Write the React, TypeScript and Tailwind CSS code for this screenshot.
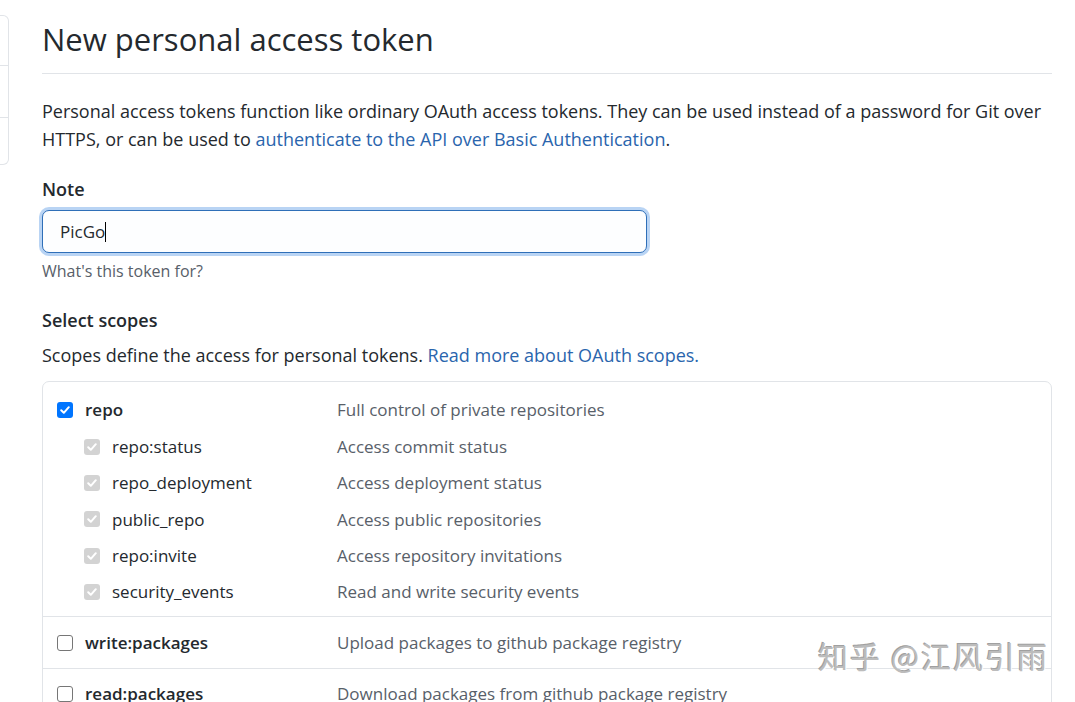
import React from "react";

const font = { fontFamily: '"Open Sans", "Noto Sans", "Noto Sans CJK SC", sans-serif' };

function Check({ variant }: { variant: "on" | "off" | "dis" }) {
  if (variant === "off") {
    return <span className="inline-block w-[16px] h-[16px] rounded-[3px] border border-[#767676] bg-white shrink-0" />;
  }
  const bg = variant === "on" ? "bg-[#0075ff]" : "bg-[#d3d3d3]";
  return (
    <span className={`inline-flex items-center justify-center w-[16px] h-[16px] rounded-[3px] ${bg} shrink-0`}>
      <svg width="12" height="12" viewBox="0 0 12 12">
        <path d="M2.2 6.3 L4.8 8.8 L9.8 3.2" fill="none" stroke="white" strokeWidth="2" strokeLinecap="round" strokeLinejoin="round" />
      </svg>
    </span>
  );
}

type Row = { name: string; desc: string; sub?: boolean; bold?: boolean; v: "on" | "off" | "dis" };

const repoRows: Row[] = [
  { name: "repo", desc: "Full control of private repositories", bold: true, v: "on" },
  { name: "repo:status", desc: "Access commit status", sub: true, v: "dis" },
  { name: "repo_deployment", desc: "Access deployment status", sub: true, v: "dis" },
  { name: "public_repo", desc: "Access public repositories", sub: true, v: "dis" },
  { name: "repo:invite", desc: "Access repository invitations", sub: true, v: "dis" },
  { name: "security_events", desc: "Read and write security events", sub: true, v: "dis" },
];

function ScopeRow({ r }: { r: Row }) {
  return (
    <div className="flex items-center h-[36.4px]">
      <div className={`flex items-center w-[280px] shrink-0 ${r.sub ? "pl-[27px]" : ""}`}>
        <Check variant={r.v} />
        <span className={`ml-[12px] ${r.bold ? "font-semibold text-[#24292e]" : "text-[#24292e]"}`}>{r.name}</span>
      </div>
      <span className="text-[#586069]">{r.desc}</span>
    </div>
  );
}

export default function App() {
  return (
    <div className="relative w-[1075px] h-[702px] overflow-hidden bg-white text-[#24292e]" style={font}>
      <div className="flex">
        <div className="w-[9px] shrink-0 pt-[15px]">
          <div className="h-[150px] border border-l-0 border-[#e1e4e8] rounded-r-[6px] flex flex-col">
            <div className="h-[50px] border-b border-[#e1e4e8]" />
            <div className="h-[52px] border-b border-[#e1e4e8]" />
          </div>
        </div>
        <div className="ml-[33px] w-[1010px] text-[18px]">
          <h1 className="text-[31px] leading-[38px] pt-[20px] pb-[15px] border-b border-[#e1e4e8] font-normal">
            New personal access token
          </h1>
          <p className="mt-[23px] leading-[28px]">
            Personal access tokens function like ordinary OAuth access tokens. They can be used instead of a password for Git over HTTPS, or can be used to{" "}
            <span className="text-[#2a65ad]">authenticate to the API over Basic Authentication</span>.
          </p>
          <div className="mt-[24px] font-semibold leading-[24px]">Note</div>
          <div className="mt-[9px] w-[605px] h-[43px] rounded-[7px] border border-[#2f6fb8] bg-[#fdfeff] shadow-[0_0_0_3px_rgba(3,102,214,0.28)] flex items-center pl-[17px] text-[17px]">
            <span>PicGo</span>
            <span className="inline-block w-px h-[20px] bg-black" />
          </div>
          <div className="mt-[8px] text-[16px] text-[#586069] leading-[20px]">What's this token for?</div>
          <div className="mt-[27px] font-semibold leading-[24px]">Select scopes</div>
          <p className="mt-[11px] leading-[24px]">
            Scopes define the access for personal tokens. <span className="text-[#2a65ad]">Read more about OAuth scopes.</span>
          </p>
          <div className="mt-[14px] border border-[#e1e4e8] rounded-[7px] text-[17px]">
            <div className="pt-[10px] pb-[6px] pl-[14px] border-b border-[#e1e4e8]">
              {repoRows.map((r) => (
                <ScopeRow key={r.name} r={r} />
              ))}
            </div>
            <div className="py-[7px] pl-[14px] border-b border-[#e1e4e8]">
              <ScopeRow r={{ name: "write:packages", desc: "Upload packages to github package registry", bold: true, v: "off" }} />
            </div>
            <div className="py-[7px] pl-[14px]">
              <ScopeRow r={{ name: "read:packages", desc: "Download packages from github package registry", bold: true, v: "off" }} />
            </div>
          </div>
        </div>
      </div>
      <div
        className="absolute left-[818px] top-[635px] text-[30px] leading-[40px] text-[#bcbcbc] tracking-[2px]"
        style={{ fontFamily: '"Noto Sans CJK SC", sans-serif', textShadow: "1px 1px 0 #ffffff, -1px -1px 0 #a0a0a0" }}
      >
        知乎 @江风引雨
      </div>
    </div>
  );
}
